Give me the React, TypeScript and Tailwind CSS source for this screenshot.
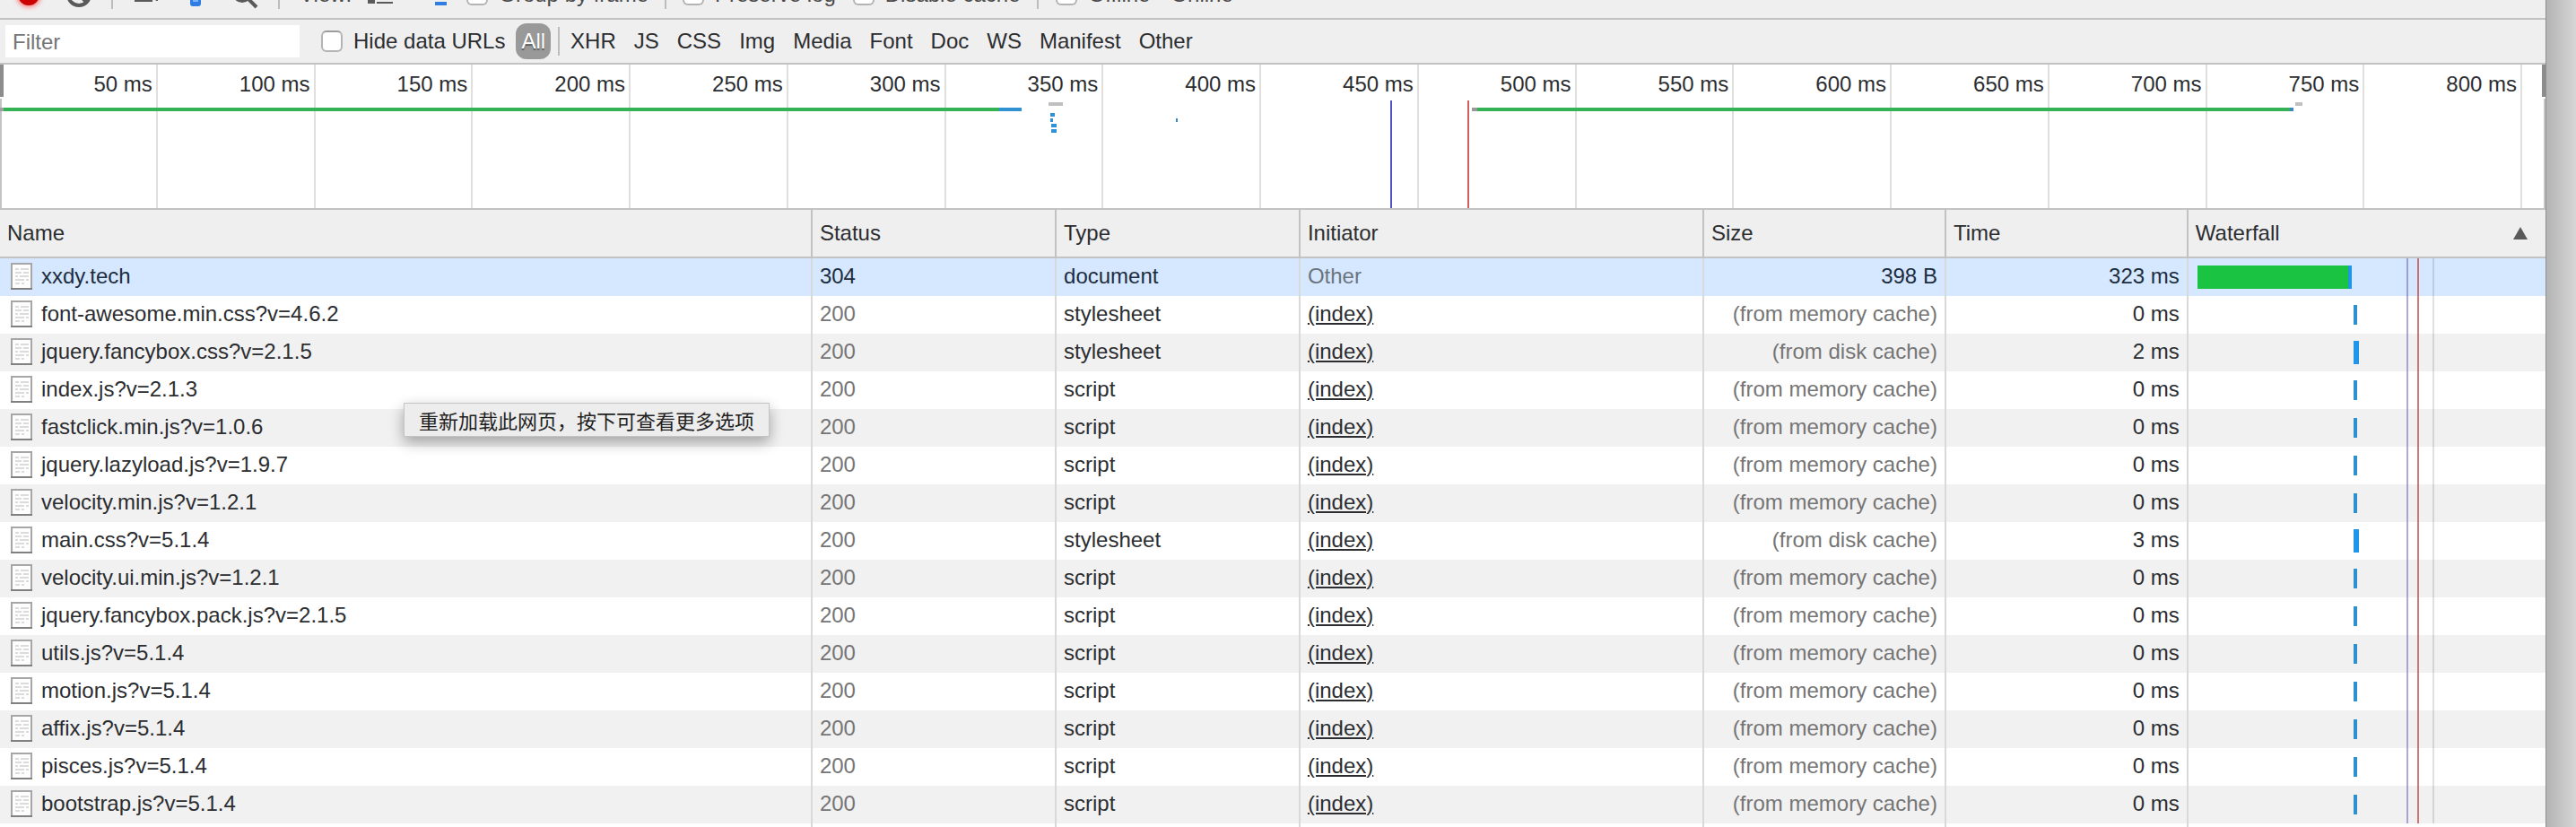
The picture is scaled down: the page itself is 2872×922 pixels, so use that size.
import { useState } from 'react';
import type { ReactNode } from 'react';

type Source = 'network' | 'memory' | 'disk';

interface RequestEntry {
  name: string;
  type: 'document' | 'stylesheet' | 'script';
  source: Source;
  time: number;
}

const REQUESTS: RequestEntry[] = [
  { name: 'xxdy.tech', type: 'document', source: 'network', time: 323 },
  { name: 'font-awesome.min.css?v=4.6.2', type: 'stylesheet', source: 'memory', time: 0 },
  { name: 'jquery.fancybox.css?v=2.1.5', type: 'stylesheet', source: 'disk', time: 2 },
  { name: 'index.js?v=2.1.3', type: 'script', source: 'memory', time: 0 },
  { name: 'fastclick.min.js?v=1.0.6', type: 'script', source: 'memory', time: 0 },
  { name: 'jquery.lazyload.js?v=1.9.7', type: 'script', source: 'memory', time: 0 },
  { name: 'velocity.min.js?v=1.2.1', type: 'script', source: 'memory', time: 0 },
  { name: 'main.css?v=5.1.4', type: 'stylesheet', source: 'disk', time: 3 },
  { name: 'velocity.ui.min.js?v=1.2.1', type: 'script', source: 'memory', time: 0 },
  { name: 'jquery.fancybox.pack.js?v=2.1.5', type: 'script', source: 'memory', time: 0 },
  { name: 'utils.js?v=5.1.4', type: 'script', source: 'memory', time: 0 },
  { name: 'motion.js?v=5.1.4', type: 'script', source: 'memory', time: 0 },
  { name: 'affix.js?v=5.1.4', type: 'script', source: 'memory', time: 0 },
  { name: 'pisces.js?v=5.1.4', type: 'script', source: 'memory', time: 0 },
  { name: 'bootstrap.js?v=5.1.4', type: 'script', source: 'memory', time: 0 },
];

const SIZE_LABEL: Record<Source, string> = {
  network: '398 B',
  memory: '(from memory cache)',
  disk: '(from disk cache)',
};

const FILTER_TYPES = ['XHR', 'JS', 'CSS', 'Img', 'Media', 'Font', 'Doc', 'WS', 'Manifest', 'Other'];

const TICKS = Array.from({ length: 16 }, (_, i) => (i + 1) * 50);

/** Overview bars: x, y, width, fill. */
const OVERVIEW_BARS: [number, number, number, string][] = [
  [0, 48, 4, '#a0a0a0'],
  [4, 48, 1110, '#33b355'],
  [1114, 48, 25, '#3192d3'],
  [1169, 42, 16, '#c0c0c0'],
  [1171, 54, 5, '#3192d3'],
  [1171, 60, 3, '#3192d3'],
  [1172, 66, 6, '#3192d3'],
  [1172, 72, 6, '#3192d3'],
  [1311, 60, 2, '#3d86c6'],
  [1641, 48, 6, '#999999'],
  [1647, 48, 906, '#33b355'],
  [2553, 48, 4, '#3a86c8'],
  [2559, 42, 8, '#c0c0c0'],
];

function Separator() {
  return <div className="h-8 w-0.5 shrink-0 bg-[#bdbdbd]" />;
}

function Checkbox({ label }: { label: string }) {
  return (
    <label className="flex shrink-0 items-center gap-3 whitespace-nowrap">
      <input
        type="checkbox"
        className="size-6 appearance-none rounded-md border-2 border-[#b4b4b4] border-t-[#9c9c9c] bg-white checked:bg-[#3b82f6]"
      />
      {label}
    </label>
  );
}

function ToolButton({
  label,
  className,
  children,
}: {
  label: string;
  className: string;
  children: ReactNode;
}) {
  return (
    <button
      type="button"
      aria-label={label}
      className={`flex h-10 shrink-0 items-center justify-center text-[#5a5a5a] ${className}`}
    >
      {children}
    </button>
  );
}

/** Scrolled partly out of view: only the lower edge of the controls shows. */
function Toolbar() {
  return (
    <div className="flex h-[22px] items-end overflow-hidden border-b-2 border-[#c2c2c2] bg-[#efefef]">
      <div className="flex h-[52px] shrink-0 items-center gap-3 pl-3 text-[#4a4a4a]">
        <ToolButton label="Record" className="w-10">
          <span className="size-6 rounded-full bg-[#cc0000] shadow-[0_0_5px_2px_#ff8080]" />
        </ToolButton>
        <ToolButton label="Clear" className="w-12">
          <svg viewBox="0 0 28 28" className="size-7" fill="none" stroke="currentColor" strokeWidth="4">
            <circle cx="14" cy="14" r="12" />
            <path d="M6 6l16 16" />
          </svg>
        </ToolButton>
        <Separator />
        <ToolButton label="Capture screenshots" className="w-12">
          <svg viewBox="0 0 32 20" className="h-5 w-8" fill="currentColor">
            <path d="M4 2h20v16H4zM24 10l6-6v13h-2z" />
          </svg>
        </ToolButton>
        <ToolButton label="Toggle filter" className="w-10">
          <svg viewBox="0 0 28 28" className="size-7">
            <path d="M1 1h26L20 13v11q0 3-3 3h-6q-3 0-3-3V13z" fill="#2f7de1" />
            <path d="M11 13h6v9h-6z" fill="#79b4fb" />
          </svg>
        </ToolButton>
        <ToolButton label="Search" className="w-12">
          <svg viewBox="0 0 32 32" className="size-8" fill="none" stroke="currentColor">
            <circle cx="12" cy="14" r="9" strokeWidth="4" />
            <path d="M18 20l10 10" strokeWidth="4" />
          </svg>
        </ToolButton>
        <Separator />
        <span className="pl-2.5">View:</span>
        <ToolButton label="Use large rows" className="w-10">
          <svg viewBox="0 0 28 20" className="h-5 w-7" fill="currentColor">
            <path d="M0 2h8v6H0zM0 12h8v8H0zM10 4h18v2H10zM10 18h18v2H10z" />
          </svg>
        </ToolButton>
        <ToolButton label="Show overview" className="ml-3 w-10">
          <svg viewBox="0 0 28 24" className="h-6 w-7" fill="#2f7de1">
            <path d="M0 0h12v4H0zM6 10h12v4H6zM11 20h13v4H11z" />
          </svg>
        </ToolButton>
        <Checkbox label="Group by frame" />
        <div className="mx-1.5">
          <Separator />
        </div>
        <div className="flex items-center gap-[19px]">
          <Checkbox label="Preserve log" />
          <Checkbox label="Disable cache" />
          <Separator />
          <Checkbox label="Offline" />
          <select aria-label="Throttling" className="w-24 appearance-none bg-transparent pl-1">
            <option>Online</option>
          </select>
        </div>
      </div>
    </div>
  );
}

function FilterBar() {
  const [active, setActive] = useState('All');
  return (
    <div className="flex h-[50px] items-center border-b-2 border-[#c2c2c2] bg-[#efefef] pl-1.5">
      <input
        type="text"
        placeholder="Filter"
        aria-label="Filter"
        className="mr-6 h-9 w-[328px] bg-white px-2 pt-0.5 outline-none placeholder:text-[#757575]"
      />
      <Checkbox label="Hide data URLs" />
      <button
        type="button"
        onClick={() => setActive('All')}
        className={`ml-3 h-10 rounded-xl px-1.5 ${
          active === 'All' ? 'bg-[#999999] text-white [text-shadow:0_2px_1px_#00000066]' : ''
        }`}
      >
        All
      </button>
      <div className="mr-0.5 ml-2">
        <Separator />
      </div>
      {FILTER_TYPES.map((type) => (
        <button
          key={type}
          type="button"
          onClick={() => setActive(type)}
          className={`h-10 rounded-xl px-2.5 ${active === type ? 'bg-[#999999] text-white' : ''}`}
        >
          {type}
        </button>
      ))}
    </div>
  );
}

function Overview() {
  return (
    <div className="relative flex h-[162px] border-b-2 border-[#c2c2c2] bg-white">
      {TICKS.map((tick) => (
        <div
          key={tick}
          className="w-[6.193%] shrink-0 border-r-2 border-[#dfdfdf] pt-2 pr-1 text-right"
        >
          {tick} ms
        </div>
      ))}
      <svg
        viewBox="0 0 2838 160"
        preserveAspectRatio="none"
        className="absolute inset-0 h-full w-full"
        shapeRendering="crispEdges"
      >
        <path d="M0 38h2v122H0zM2836 38h2v122h-2z" fill="#c4c4c4" />
        <path d="M0 0h4v36H0zM2834 0h4v36h-4z" fill="#8c8c8c" />
        {OVERVIEW_BARS.map(([x, y, width, fill]) => (
          <rect key={`${x}-${y}`} x={x} y={y} width={width} height="4" fill={fill} />
        ))}
        <rect x="1550" y="40" width="2" height="120" fill="#5252c0" />
        <rect x="1636" y="40" width="2" height="120" fill="#d25f5f" />
      </svg>
    </div>
  );
}

function FileIcon() {
  return (
    <svg viewBox="0 0 24 30" className="h-[30px] w-6 shrink-0">
      <rect x="1" y="1" width="22" height="28" fill="#fdfdfd" stroke="#a6a6a6" strokeWidth="2" />
      <path d="M0 29h24" stroke="#808080" strokeWidth="2" />
      <path
        d="M5 7h4M11 7h9M5 11h7M14 11h6M5 15h3M10 15h10M5 19h10M17 19h3M5 23h5M12 23h3"
        stroke="#dcdcdc"
        strokeWidth="2"
      />
    </svg>
  );
}

function WaterfallCell({ source }: { source: Source }) {
  return (
    <svg
      viewBox="0 0 398 42"
      preserveAspectRatio="none"
      className="block h-[42px] w-full"
      shapeRendering="crispEdges"
    >
      {source === 'network' && (
        <>
          <rect x="10" y="8" width="168" height="26" fill="#1ac341" />
          <rect x="178" y="8" width="4" height="26" fill="#1e96e4" />
        </>
      )}
      {source === 'memory' && <rect x="184" y="10" width="4" height="22" fill="#2f90d0" />}
      {source === 'disk' && <rect x="184" y="8" width="6" height="26" fill="#2196e8" />}
      <rect x="243" y="0" width="2" height="42" fill="#6a5fc0" fillOpacity="0.55" />
      <rect x="255" y="0" width="2" height="42" fill="#c04a4a" fillOpacity="0.75" />
      <rect x="272" y="0" width="2" height="42" fill="#000000" fillOpacity="0.12" />
    </svg>
  );
}

const TH = 'h-[54px] border-r-2 border-b-2 border-[#c2c2c2] px-2 text-left font-normal';
const TD = 'h-[42px] border-r-2 border-[#d9d9d9] px-2 pt-0 pb-0.5';

function RequestTable() {
  return (
    <table className="w-full table-fixed border-separate border-spacing-0">
      <colgroup>
        <col className="w-[31.92%]" />
        <col className="w-[9.59%]" />
        <col className="w-[9.58%]" />
        <col className="w-[15.86%]" />
        <col className="w-[9.51%]" />
        <col className="w-[9.51%]" />
        <col />
      </colgroup>
      <thead className="bg-[#efefef]">
        <tr>
          <th className={TH}>Name</th>
          <th className={TH}>Status</th>
          <th className={TH}>Type</th>
          <th className={TH}>Initiator</th>
          <th className={TH}>Size</th>
          <th className={TH}>Time</th>
          <th className="h-[54px] border-b-2 border-[#c2c2c2] pr-5 pl-2 text-left font-normal">
            <div className="flex items-center justify-between">
              Waterfall
              <svg viewBox="0 0 16 14" className="h-3.5 w-4" fill="#5a5a5a">
                <path d="M8 0l8 14H0z" />
              </svg>
            </div>
          </th>
        </tr>
      </thead>
      <tbody>
        {REQUESTS.map(({ name, type, source, time }) => {
          const fresh = source === 'network';
          return (
            <tr key={name} className={fresh ? 'bg-[#d5e8ff] text-[#1d2d40]' : 'odd:bg-[#f1f1f1]'}>
              <td className={TD}>
                <div className="flex items-center gap-2.5 pl-1">
                  <FileIcon />
                  {name}
                </div>
              </td>
              <td className={TD}>
                <span className={fresh ? '' : 'text-[#757575]'}>{fresh ? 304 : 200}</span>
              </td>
              <td className={TD}>{type}</td>
              <td className={TD}>
                {fresh ? (
                  <span className="text-[#6b7580]">Other</span>
                ) : (
                  <a href="#index" className="underline decoration-2 underline-offset-2">
                    (index)
                  </a>
                )}
              </td>
              <td className={`${TD} text-right`}>
                <span className={fresh ? '' : 'text-[#757575]'}>{SIZE_LABEL[source]}</span>
              </td>
              <td className={`${TD} text-right`}>{time} ms</td>
              <td className="p-0">
                <WaterfallCell source={source} />
              </td>
            </tr>
          );
        })}
        {/* Carries the column rules down past the last request */}
        <tr aria-hidden="true">
          {Array.from({ length: 6 }, (_, i) => (
            <td key={i} className="h-1 border-r-2 border-[#d9d9d9] p-0" />
          ))}
          <td className="p-0" />
        </tr>
      </tbody>
    </table>
  );
}

export default function App() {
  return (
    <div className="flex min-h-screen overflow-hidden bg-white font-['Liberation_Sans',Arial,sans-serif] text-2xl leading-7 text-[#2b2d30]">
      <main className="relative min-w-0 flex-1">
        <Toolbar />
        <FilterBar />
        <Overview />
        <RequestTable />
        <div
          role="tooltip"
          className="absolute top-[449px] left-[450px] flex h-[38px] items-center border border-[#c4c4c4] bg-[#ededed] px-4 font-['Noto_Sans_CJK_SC',sans-serif] text-[22px] whitespace-nowrap text-[#1f1f1f] shadow-[0_6px_16px_#00000055]"
        >
          重新加载此网页，按下可查看更多选项
        </div>
      </main>
      <div className="w-[34px] shrink-0 border-l border-[#8f8f8f] bg-linear-to-r from-[#b4b4b4] to-[#d6d6d6]" />
    </div>
  );
}
